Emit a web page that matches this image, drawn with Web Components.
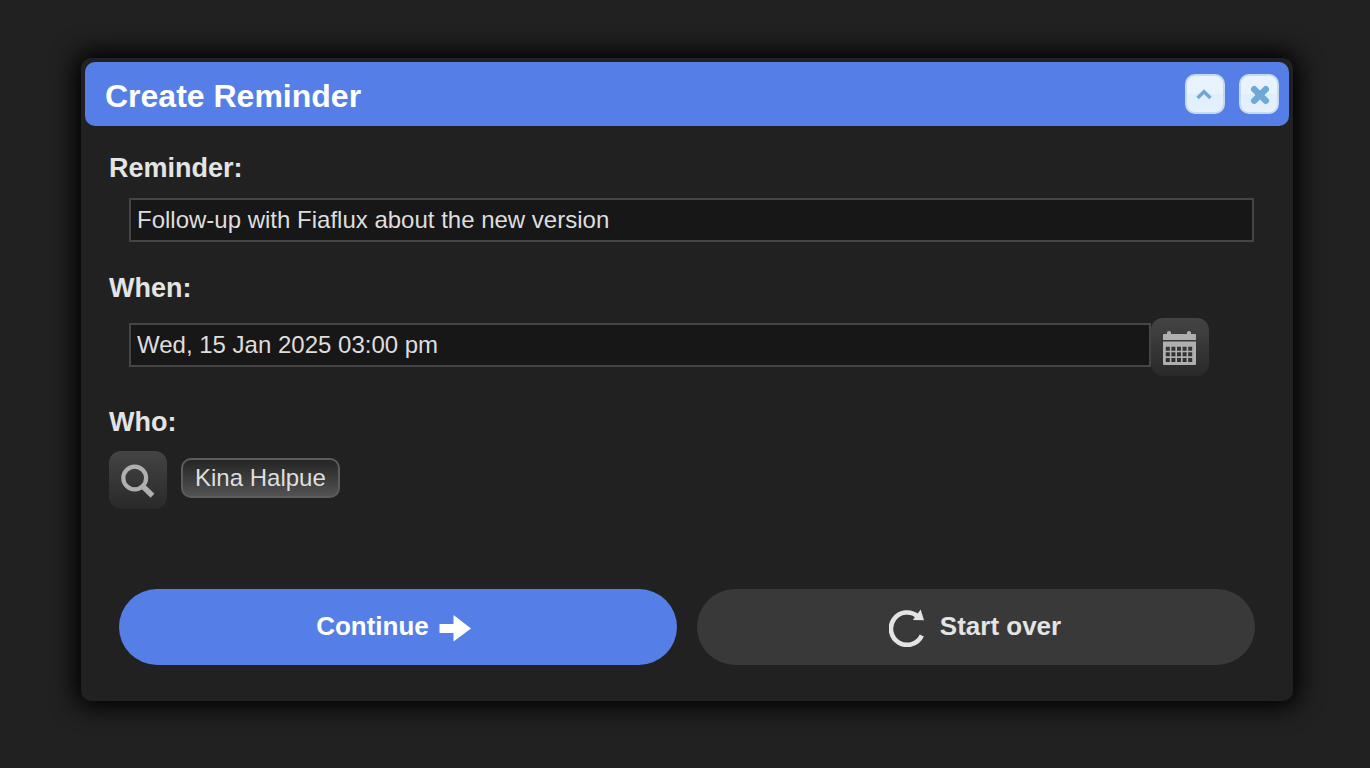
<!DOCTYPE html>
<html lang="en">
<head>
<meta charset="utf-8">
<title>Create Reminder</title>
<style>
    body {
        margin: 0;
        background: #212121;
        color: #e4e4e4;
        font-family: "Liberation Sans", Arial, sans-serif;
    }
</style>
</head>
<body>

<reminder-dialog></reminder-dialog>

<script>
const ICONS = {
    up: `<svg width="36" height="36" viewBox="0 0 36 36"><path d="M10.500 22 L17 15.700 L23.500 22" fill="none" stroke="#6ea9d6" stroke-width="3.400"/></svg>`,
    close: `<svg width="36" height="36" viewBox="0 0 36 36"><path d="M13.200 13.200 L24.800 24.800 M24.800 13.200 L13.200 24.800" fill="none" stroke="#6ea9d6" stroke-width="6.400" stroke-linecap="round"/></svg>`,
    calendar: `<svg width="58" height="58" viewBox="0 0 58 58">
        <path fill="#afafaf" d="M12 22 V17 Q12 16 13 16 H16 V14.5 Q16 13 18 13 Q20 13 20 14.5 V16 H36 V14.5 Q36 13 38 13 Q40 13 40 14.5 V16 H44 Q45 16 45 17 V22 Z"/>
        <path fill="#afafaf" fill-rule="evenodd" d="M12 23.500 H45 V46 Q45 47 44 47 H13 Q12 47 12 46 Z
            M14.800 28.700 h4 v4 h-4 z m5.600 0 h4 v4 h-4 z m5.600 0 h4 v4 h-4 z m5.600 0 h4 v4 h-4 z m5.600 0 h4 v4 h-4 z
            M14.800 34.300 h4 v4 h-4 z m5.600 0 h4 v4 h-4 z m5.600 0 h4 v4 h-4 z m5.600 0 h4 v4 h-4 z m5.600 0 h4 v4 h-4 z
            M14.800 39.900 h4 v4 h-4 z m5.600 0 h4 v4 h-4 z m5.600 0 h4 v4 h-4 z m5.600 0 h4 v4 h-4 z m5.600 0 h4 v4 h-4 z"/>
    </svg>`,
    search: `<svg width="58" height="58" viewBox="0 0 58 58" fill="none" stroke="#b0b0b0">
        <circle cx="25.700" cy="27" r="11.400" stroke-width="4.200"/>
        <path d="M33.500 35 L43.500 44.700" stroke-width="5.400"/>
    </svg>`,
    arrow: `<svg width="32" height="28" viewBox="0 0 32 28"><path fill="#fff" d="M1 10 H14.500 V1 L32 14.500 L14.500 27.500 V19 H1 Q0.500 19 0.500 18.500 V10.500 Q0.500 10 1 10 Z"/></svg>`,
    redo: `<svg width="36" height="38" viewBox="0 0 36 38">
        <path d="M28.800 7.500 A16.200 16.200 0 1 0 32.800 26.500" fill="none" stroke="#e4e4e4" stroke-width="4.600"/>
        <path d="M31.700 0.500 L35 11.300 L23.800 11 Z" fill="#e4e4e4"/>
    </svg>`
};

// ---------------- BUTTONS ----------------

class IconButton extends HTMLElement {

    constructor() {
        super();
        this.attachShadow({ mode: "open" });
    }

    connectedCallback() {
        this.shadowRoot.innerHTML = `
            <style>
                :host { display: block; flex: none; }
                button {
                    display: grid;
                    place-items: center;
                    box-sizing: border-box;
                    width: 58px;
                    height: 58px;
                    padding: 0;
                    border: none;
                    border-radius: 12px;
                    background: linear-gradient(#444, #292929);
                    cursor: pointer;
                }
                :host([light]) button {
                    width: 40px;
                    height: 40px;
                    border: 2px solid #c5dbec;
                    border-radius: 10px;
                    background: linear-gradient(#e8f3fd 50%, #deeefb 50%, #e6f2fc);
                }
                svg { display: block; }
            </style>
            <button type="button" aria-label="${this.getAttribute("label")}">${ICONS[this.getAttribute("icon")]}</button>
        `;
    }
}

customElements.define("icon-button", IconButton);


class PillButton extends HTMLElement {

    constructor() {
        super();
        this.attachShadow({ mode: "open" });
    }

    connectedCallback() {
        this.shadowRoot.innerHTML = `
            <style>
                :host { display: block; flex: 1; }
                button {
                    display: flex;
                    align-items: center;
                    justify-content: center;
                    width: 100%;
                    height: 76px;
                    padding: 0 2px 2px 0;
                    border: none;
                    border-radius: 38px;
                    background: #393939;
                    color: #e4e4e4;
                    font: bold 26px/32px "Liberation Sans", Arial, sans-serif;
                    gap: 15px;
                    cursor: pointer;
                }
                :host([primary]) button {
                    flex-direction: row-reverse;
                    gap: 10px;
                    padding-right: 9px;
                    background: #557ee6;
                    color: #fff;
                }
                svg { display: block; margin-top: 4px; }
            </style>
            <button type="button">${ICONS[this.getAttribute("icon")]}<slot></slot></button>
        `;
    }
}

customElements.define("pill-button", PillButton);


// ---------------- FIELDS ----------------

class TextField extends HTMLElement {

    constructor() {
        super();
        this.attachShadow({ mode: "open" });
    }

    connectedCallback() {
        this.shadowRoot.innerHTML = `
            <style>
                :host { display: block; }
                label {
                    display: block;
                    margin-bottom: 14px;
                    font-size: 27px;
                    font-weight: bold;
                    line-height: 32px;
                }
                .row {
                    display: flex;
                    align-items: center;
                    margin-left: 20px;
                }
                input {
                    flex: 1;
                    min-width: 0;
                    box-sizing: border-box;
                    height: 44px;
                    margin: 0 0 4px;
                    padding: 0 6px;
                    border: 2px solid #454545;
                    border-radius: 0;
                    outline: none;
                    background: #171717;
                    color: #dedede;
                    font: 24px "Liberation Sans", Arial, sans-serif;
                }
            </style>
            <label for="field">${this.getAttribute("label")}</label>
            <div class="row">
                <input id="field" type="text" value="${this.getAttribute("value")}">
                <slot></slot>
            </div>
        `;
    }
}

customElements.define("text-field", TextField);


class PersonTag extends HTMLElement {

    constructor() {
        super();
        this.attachShadow({ mode: "open" });
        this.shadowRoot.innerHTML = `
            <style>
                :host { display: block; padding-bottom: 4px; }
                button {
                    display: block;
                    box-sizing: border-box;
                    height: 40px;
                    padding: 0 12px;
                    border: 2px solid #5c5c5c;
                    border-radius: 10px;
                    background: linear-gradient(#222, #555) border-box;
                    color: #dedede;
                    font: 24px/36px "Liberation Sans", Arial, sans-serif;
                    cursor: pointer;
                }
            </style>
            <button type="button"><slot></slot></button>
        `;
    }
}

customElements.define("person-tag", PersonTag);


// ---------------- DIALOG ----------------

class DialogBox extends HTMLElement {

    constructor() {
        super();
        this.attachShadow({ mode: "open" });
        this.shadowRoot.innerHTML = `
            <style>
                :host {
                    display: block;
                    padding: 4px;
                    border-radius: 10px;
                    background: #212121;
                    box-shadow: 0 0 24px 6px #000;
                }
                header {
                    display: flex;
                    align-items: center;
                    gap: 14px;
                    height: 64px;
                    padding: 0 10px 0 20px;
                    box-sizing: border-box;
                    border-radius: 10px;
                    background: #557ee6;
                }
                h1 {
                    flex: 1;
                    margin: 0;
                    padding-top: 4px;
                    color: #fff;
                    font-size: 32px;
                    line-height: 40px;
                }
                section { padding: 26px 24px 32px; }
            </style>
            <header>
                <h1><slot name="title"></slot></h1>
                <icon-button light icon="up" label="Collapse"></icon-button>
                <icon-button light icon="close" label="Close"></icon-button>
            </header>
            <section><slot></slot></section>
        `;
    }
}

customElements.define("dialog-box", DialogBox);


class ReminderDialog extends HTMLElement {

    constructor() {
        super();
        this.attachShadow({ mode: "open" });
    }

    connectedCallback() {
        this.render();
    }

    render() {
        this.shadowRoot.innerHTML = `
            <style>
                :host { display: block; padding: 58px 77px 58px 81px; }
                .reminder { margin-right: 11px; }
                .when { margin: 26px 56px 0 0; }
                h2 {
                    margin: 30px 0 13px;
                    font-size: 27px;
                    line-height: 32px;
                }
                .who {
                    display: flex;
                    align-items: center;
                    gap: 14px;
                }
                .actions {
                    display: flex;
                    gap: 20px;
                    margin: 80px 10px 0;
                }
            </style>

            <dialog-box>
                <span slot="title">Create Reminder</span>

                <text-field class="reminder" label="Reminder:" value="Follow-up with Fiaflux about the new version"></text-field>

                <text-field class="when" label="When:" value="Wed, 15 Jan 2025 03:00 pm">
                    <icon-button icon="calendar" label="Pick a date"></icon-button>
                </text-field>

                <h2>Who:</h2>
                <div class="who">
                    <icon-button icon="search" label="Find a person"></icon-button>
                    <person-tag>Kina Halpue</person-tag>
                </div>

                <div class="actions">
                    <pill-button primary icon="arrow">Continue</pill-button>
                    <pill-button icon="redo">Start over</pill-button>
                </div>
            </dialog-box>
        `;
    }
}

customElements.define("reminder-dialog", ReminderDialog);
</script>
</body>
</html>
